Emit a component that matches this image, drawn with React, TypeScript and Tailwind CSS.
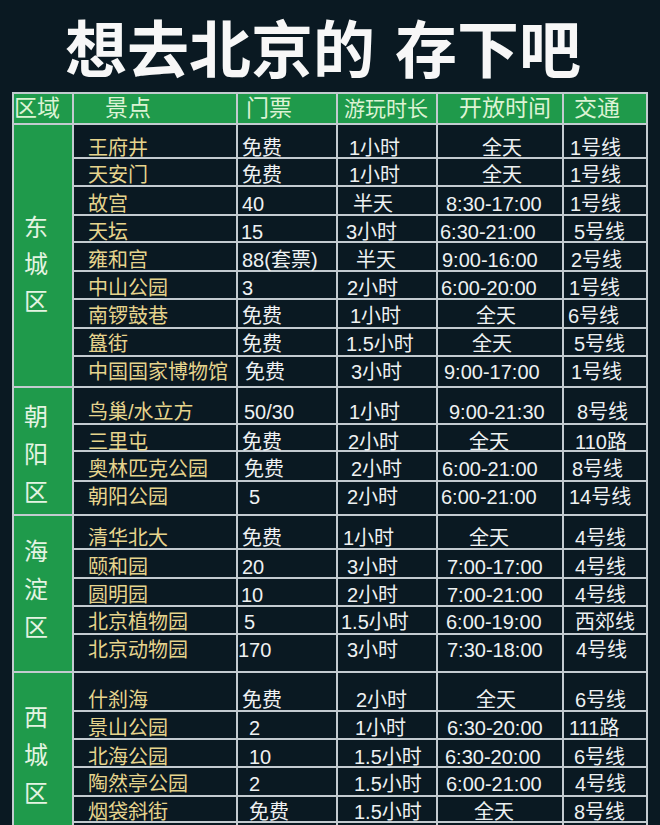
import React from "react";

type Cell = [string, string];
type Row = { h: string; pt: string; name: string; t: Cell; d: Cell; o: Cell; r: Cell };
type Group = { chars: string[]; cls: string; rows: Row[] };

const groups: Group[] = [
  {
    chars: ["东", "城", "区"],
    cls: "pt-[84px] leading-[37px]",
    rows: [
      { h: "h-[34px]", pt: "pt-[13px]", name: "王府井", t: ["免费", "pl-[4px]"], d: ["1小时", "pl-[11px]"], o: ["全天", "pl-[44px]"], r: ["1号线", "pl-[6px]"] },
      { h: "h-[28px]", pt: "pt-[6px]", name: "天安门", t: ["免费", "pl-[4px]"], d: ["1小时", "pl-[11px]"], o: ["全天", "pl-[44px]"], r: ["1号线", "pl-[6px]"] },
      { h: "h-[29px]", pt: "pt-[7px]", name: "故宫", t: ["40", "pl-[4px]"], d: ["半天", "pl-[15px]"], o: ["8:30-17:00", "pl-[8px]"], r: ["1号线", "pl-[6px]"] },
      { h: "h-[27px]", pt: "pt-[6px]", name: "天坛", t: ["15", "pl-[3px]"], d: ["3小时", "pl-[8px]"], o: ["6:30-21:00", "pl-[2px]"], r: ["5号线", "pl-[10px]"] },
      { h: "h-[29px]", pt: "pt-[7px]", name: "雍和宫", t: ["88(套票)", "pl-[4px]"], d: ["半天", "pl-[18px]"], o: ["9:00-16:00", "pl-[4px]"], r: ["2号线", "pl-[7px]"] },
      { h: "h-[28px]", pt: "pt-[6px]", name: "中山公园", t: ["3", "pl-[4px]"], d: ["2小时", "pl-[9px]"], o: ["6:00-20:00", "pl-[3px]"], r: ["1号线", "pl-[5px]"] },
      { h: "h-[29px]", pt: "pt-[6px]", name: "南锣鼓巷", t: ["免费", "pl-[4px]"], d: ["1小时", "pl-[12px]"], o: ["全天", "pl-[38px]"], r: ["6号线", "pl-[4px]"] },
      { h: "h-[28px]", pt: "pt-[5px]", name: "簋街", t: ["免费", "pl-[4px]"], d: ["1.5小时", "pl-[8px]"], o: ["全天", "pl-[34px]"], r: ["5号线", "pl-[10px]"] },
      { h: "h-[31px]", pt: "pt-[5px]", name: "中国国家博物馆", t: ["免费", "pl-[7px]"], d: ["3小时", "pl-[13px]"], o: ["9:00-17:00", "pl-[6px]"], r: ["1号线", "pl-[7px]"] },
    ],
  },
  {
    chars: ["朝", "阳", "区"],
    cls: "pt-[10px] leading-[38px]",
    rows: [
      { h: "h-[37px]", pt: "pt-[14px]", name: "鸟巢/水立方", t: ["50/30", "pl-[6px]"], d: ["1小时", "pl-[11px]"], o: ["9:00-21:30", "pl-[11px]"], r: ["8号线", "pl-[13px]"] },
      { h: "h-[27px]", pt: "pt-[7px]", name: "三里屯", t: ["免费", "pl-[4px]"], d: ["2小时", "pl-[10px]"], o: ["全天", "pl-[31px]"], r: ["110路", "pl-[11px]"] },
      { h: "h-[30px]", pt: "pt-[7px]", name: "奥林匹克公园", t: ["免费", "pl-[6px]"], d: ["2小时", "pl-[13px]"], o: ["6:00-21:00", "pl-[4px]"], r: ["8号线", "pl-[8px]"] },
      { h: "h-[34px]", pt: "pt-[5px]", name: "朝阳公园", t: ["5", "pl-[11px]"], d: ["2小时", "pl-[9px]"], o: ["6:00-21:00", "pl-[3px]"], r: ["14号线", "pl-[5px]"] },
    ],
  },
  {
    chars: ["海", "淀", "区"],
    cls: "pt-[17px] leading-[38px]",
    rows: [
      { h: "h-[34px]", pt: "pt-[12px]", name: "清华北大", t: ["免费", "pl-[4px]"], d: ["1小时", "pl-[5px]"], o: ["全天", "pl-[31px]"], r: ["4号线", "pl-[11px]"] },
      { h: "h-[29px]", pt: "pt-[7px]", name: "颐和园", t: ["20", "pl-[4px]"], d: ["3小时", "pl-[9px]"], o: ["7:00-17:00", "pl-[9px]"], r: ["4号线", "pl-[11px]"] },
      { h: "h-[28px]", pt: "pt-[6px]", name: "圆明园", t: ["10", "pl-[3px]"], d: ["2小时", "pl-[9px]"], o: ["7:00-21:00", "pl-[9px]"], r: ["4号线", "pl-[11px]"] },
      { h: "h-[28px]", pt: "pt-[5px]", name: "北京植物园", t: ["5", "pl-[6px]"], d: ["1.5小时", "pl-[3px]"], o: ["6:00-19:00", "pl-[8px]"], r: ["西郊线", "pl-[11px]"] },
      { h: "h-[38px]", pt: "pt-[5px]", name: "北京动物园", t: ["170", "pl-[0px]"], d: ["3小时", "pl-[9px]"], o: ["7:30-18:00", "pl-[9px]"], r: ["4号线", "pl-[12px]"] },
    ],
  },
  {
    chars: ["西", "城", "区"],
    cls: "pt-[26px] leading-[38px]",
    rows: [
      { h: "h-[39px]", pt: "pt-[17px]", name: "什刹海", t: ["免费", "pl-[4px]"], d: ["2小时", "pl-[18px]"], o: ["全天", "pl-[38px]"], r: ["6号线", "pl-[11px]"] },
      { h: "h-[28px]", pt: "pt-[6px]", name: "景山公园", t: ["2", "pl-[11px]"], d: ["1小时", "pl-[17px]"], o: ["6:30-20:00", "pl-[9px]"], r: ["111路", "pl-[5px]"] },
      { h: "h-[28px]", pt: "pt-[7px]", name: "北海公园", t: ["10", "pl-[11px]"], d: ["1.5小时", "pl-[16px]"], o: ["6:30-20:00", "pl-[7px]"], r: ["6号线", "pl-[10px]"] },
      { h: "h-[29px]", pt: "pt-[6px]", name: "陶然亭公园", t: ["2", "pl-[11px]"], d: ["1.5小时", "pl-[16px]"], o: ["6:00-21:00", "pl-[8px]"], r: ["4号线", "pl-[11px]"] },
      { h: "h-[26px]", pt: "pt-[5px]", name: "烟袋斜街", t: ["免费", "pl-[11px]"], d: ["1.5小时", "pl-[16px]"], o: ["全天", "pl-[36px]"], r: ["8号线", "pl-[10px]"] },
      { h: "h-[28px]", pt: "pt-[5px]", name: "", t: ["", "pl-[4px]"], d: ["", "pl-[4px]"], o: ["", "pl-[4px]"], r: ["", "pl-[4px]"] },
    ],
  },
];

function TableRow({ row }: { row: Row }) {
  const base = `h-full ${row.pt} leading-[20px] whitespace-nowrap`;
  return (
    <div className={`flex border-b-2 border-[#c3cbd0] ${row.h}`}>
      <div className={`w-[164px] border-r-2 border-[#c3cbd0] pl-[14px] text-[#e6d48d] ${base}`}>{row.name}</div>
      <div className={`w-[100px] border-r-2 border-[#c3cbd0] ${row.t[1]} ${base}`}>{row.t[0]}</div>
      <div className={`w-[100px] border-r-2 border-[#c3cbd0] ${row.d[1]} ${base}`}>{row.d[0]}</div>
      <div className={`w-[126px] border-r-2 border-[#c3cbd0] ${row.o[1]} ${base}`}>{row.o[0]}</div>
      <div className={`w-[82px] ${row.r[1]} ${base}`}>{row.r[0]}</div>
    </div>
  );
}

export default function App() {
  return (
    <div className="h-[825px] w-[660px] overflow-hidden bg-[#0a1922] font-['Liberation_Sans','Noto_Sans_CJK_SC',sans-serif]">
      <div className="h-[92px] pt-[6px] pl-[65px] whitespace-nowrap text-[62px] leading-[80px] font-bold text-[#f7f7f7] font-['Noto_Sans_CJK_SC',sans-serif]">
        <span>想去北京的</span>
        <span className="ml-[20px]">存下吧</span>
      </div>
      <div className="ml-[12px] w-[636px] border-2 border-[#c3cbd0] text-[20px] text-[#eef1f2]">
        <div className="flex h-[31px] border-b-2 border-[#c3cbd0] bg-[#1f9a4b] text-[23px] text-[#dcf3d4]">
          <div className="flex w-[60px] items-center border-r-2 border-[#c3cbd0] pl-[0px] whitespace-nowrap">区域</div>
          <div className="flex w-[164px] items-center border-r-2 border-[#c3cbd0] pl-[31px] whitespace-nowrap">景点</div>
          <div className="flex w-[100px] items-center border-r-2 border-[#c3cbd0] pl-[8px] whitespace-nowrap">门票</div>
          <div className="flex w-[100px] items-center border-r-2 border-[#c3cbd0] pl-[6px] text-[21px] whitespace-nowrap">游玩时长</div>
          <div className="flex w-[126px] items-center border-r-2 border-[#c3cbd0] pl-[21px] whitespace-nowrap">开放时间</div>
          <div className="flex w-[82px] items-center pl-[10px] whitespace-nowrap">交通</div>
        </div>
        {groups.map((g, gi) => (
          <div key={gi} className="flex">
            <div className={`flex w-[60px] flex-col items-start border-r-2 border-b-2 border-[#c3cbd0] bg-[#1f9a4b] pl-[10px] text-[24px] text-[#e4f4e2] ${g.cls}`}>
              {g.chars.map((c, ci) => (
                <span key={ci}>{c}</span>
              ))}
            </div>
            <div className="flex flex-col">
              {g.rows.map((r, ri) => (
                <TableRow key={ri} row={r} />
              ))}
            </div>
          </div>
        ))}
      </div>
    </div>
  );
}
